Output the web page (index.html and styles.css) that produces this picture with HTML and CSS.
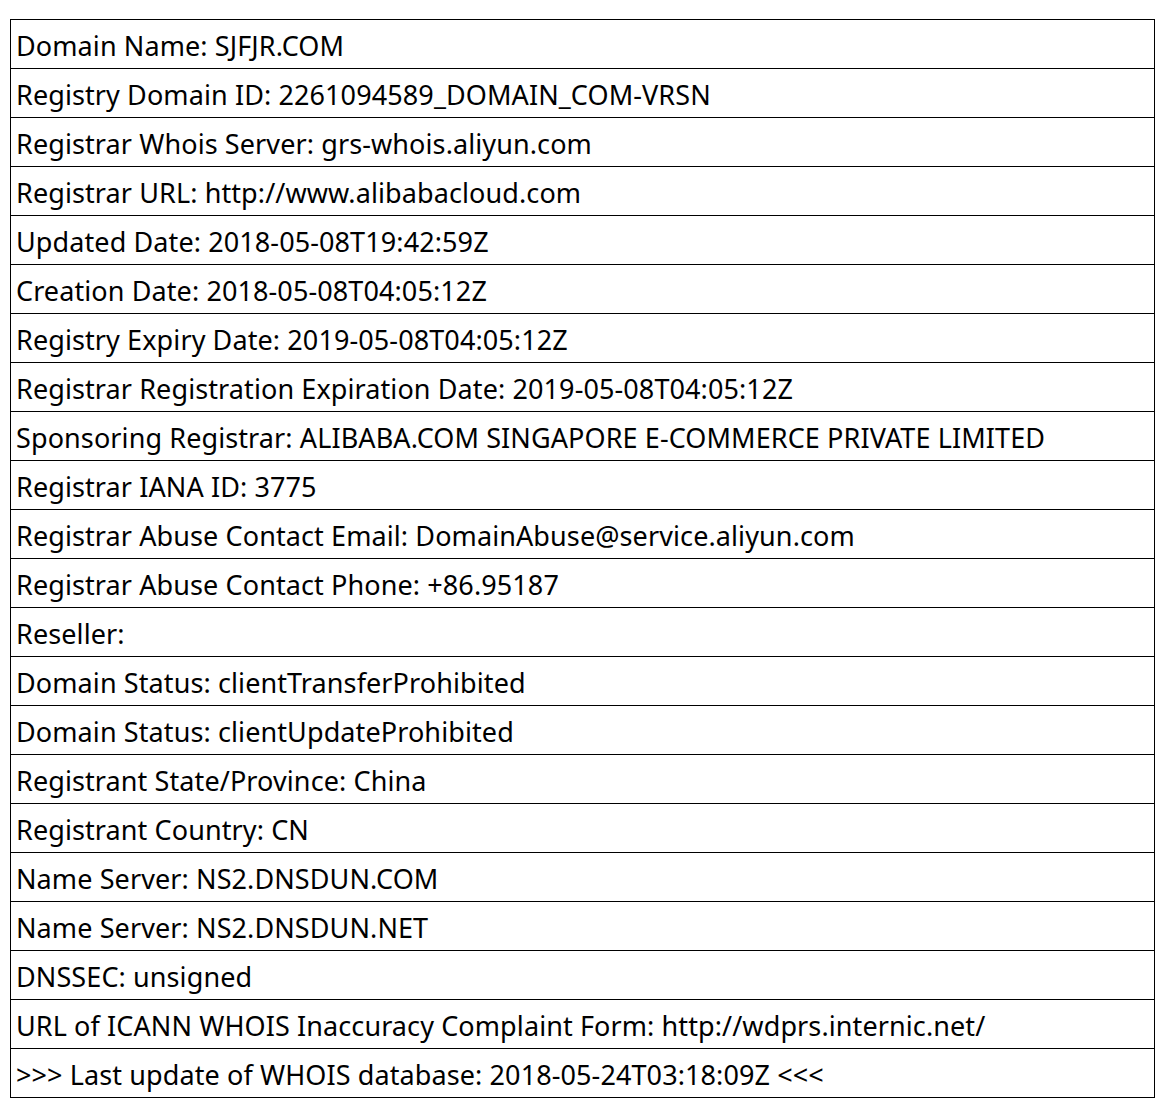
FILE: index.html
```html
<!DOCTYPE html>
<html>
<head>
<meta charset="utf-8">
<link rel="stylesheet" href="styles.css">
</head>
<body>
<table class="whois">
<tr><td>Domain Name: SJFJR.COM</td></tr>
<tr><td>Registry Domain ID: 2261094589_DOMAIN_COM-VRSN</td></tr>
<tr><td>Registrar Whois Server: grs-whois.aliyun.com</td></tr>
<tr><td>Registrar URL: http://www.alibabacloud.com</td></tr>
<tr><td>Updated Date: 2018-05-08T19:42:59Z</td></tr>
<tr><td>Creation Date: 2018-05-08T04:05:12Z</td></tr>
<tr><td>Registry Expiry Date: 2019-05-08T04:05:12Z</td></tr>
<tr><td>Registrar Registration Expiration Date: 2019-05-08T04:05:12Z</td></tr>
<tr><td>Sponsoring Registrar: ALIBABA.COM SINGAPORE E-COMMERCE PRIVATE LIMITED</td></tr>
<tr><td>Registrar IANA ID: 3775</td></tr>
<tr><td>Registrar Abuse Contact Email: DomainAbuse@service.aliyun.com</td></tr>
<tr><td>Registrar Abuse Contact Phone: +86.95187</td></tr>
<tr><td>Reseller:</td></tr>
<tr><td>Domain Status: clientTransferProhibited</td></tr>
<tr><td>Domain Status: clientUpdateProhibited</td></tr>
<tr><td>Registrant State/Province: China</td></tr>
<tr><td>Registrant Country: CN</td></tr>
<tr><td>Name Server: NS2.DNSDUN.COM</td></tr>
<tr><td>Name Server: NS2.DNSDUN.NET</td></tr>
<tr><td>DNSSEC: unsigned</td></tr>
<tr><td>URL of ICANN WHOIS Inaccuracy Complaint Form: http://wdprs.internic.net/</td></tr>
<tr><td>&gt;&gt;&gt; Last update of WHOIS database: 2018-05-24T03:18:09Z &lt;&lt;&lt;</td></tr>
</table>
</body>
</html>
```

FILE: styles.css
```css
html, body {
  margin: 0;
  padding: 0;
  background: #ffffff;
}
body {
  padding: 19px 0 0 10px;
}
.whois {
  border-collapse: collapse;
  width: 1145px;
  font-family: "Noto Sans", "Open Sans", sans-serif;
  font-size: 27px;
  letter-spacing: 0.1px;
  color: #000000;
}
.whois td {
  border: 1px solid #000000;
  height: 48px;
  padding: 4px 5px 0 5px;
  box-sizing: border-box;
  line-height: 44px;
  vertical-align: top;
  white-space: nowrap;
}
```
